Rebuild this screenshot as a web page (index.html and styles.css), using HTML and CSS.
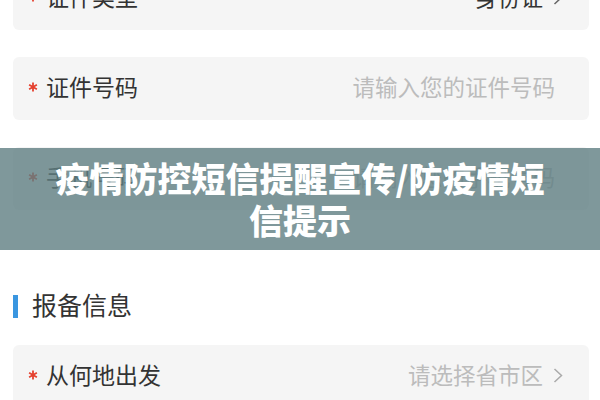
FILE: index.html
```html
<!DOCTYPE html>
<html lang="zh-CN">
<head>
  <meta charset="UTF-8">
  <meta name="viewport" content="width=device-width, initial-scale=1.0">
  <title>疫情防控短信提醒宣传</title>
  <link rel="stylesheet" href="styles.css">
</head>
<body>
  <div class="page">
    <!-- Identity fields -->
    <div class="form-list">
      <div class="field">
        <div class="field-label">
          <svg class="required" width="10" height="10" viewBox="0 0 10 10"><path d="M5 0.5V9.5M1.1 2.75L8.9 7.25M1.1 7.25L8.9 2.75" stroke="#e5412f" stroke-width="1.8"/></svg>
          证件类型
        </div>
        <div class="field-value selected">
          身份证
          <svg class="chevron" width="10" height="15" viewBox="0 0 10 15"><path d="M1.5 1L8.5 7.5L1.5 14" fill="none" stroke="#666" stroke-width="1.5"/></svg>
        </div>
      </div>

      <div class="field">
        <div class="field-label">
          <svg class="required" width="10" height="10" viewBox="0 0 10 10"><path d="M5 0.5V9.5M1.1 2.75L8.9 7.25M1.1 7.25L8.9 2.75" stroke="#e5412f" stroke-width="1.8"/></svg>
          证件号码
        </div>
        <div class="field-value placeholder input">请输入您的证件号码</div>
      </div>

      <div class="field">
        <div class="field-label">
          <svg class="required" width="10" height="10" viewBox="0 0 10 10"><path d="M5 0.5V9.5M1.1 2.75L8.9 7.25M1.1 7.25L8.9 2.75" stroke="#e5412f" stroke-width="1.8"/></svg>
          手机号码
        </div>
        <div class="field-value placeholder input">请输入您的手机号码</div>
      </div>
    </div>

    <!-- Report section -->
    <div class="section-title">报备信息</div>

    <div class="form-list">
      <div class="field">
        <div class="field-label">
          <svg class="required" width="10" height="10" viewBox="0 0 10 10"><path d="M5 0.5V9.5M1.1 2.75L8.9 7.25M1.1 7.25L8.9 2.75" stroke="#e5412f" stroke-width="1.8"/></svg>
          从何地出发
        </div>
        <div class="field-value placeholder">
          请选择省市区
          <svg class="chevron" width="10" height="15" viewBox="0 0 10 15"><path d="M1.5 1L8.5 7.5L1.5 14" fill="none" stroke="#aaa" stroke-width="1.5"/></svg>
        </div>
      </div>
    </div>
  </div>

  <!-- Caption banner -->
  <div class="banner">
    <div class="banner-text">疫情防控短信提醒宣传/防疫情短信提示</div>
  </div>
</body>
</html>
```

FILE: styles.css
```css
/* =====================
   Global
   ===================== */
body {
  margin: 0;
  background: #fff;
  font-family: "Noto Sans CJK SC", "Noto Sans", sans-serif;
  color: #333;
  overflow: hidden;
}

.page {
  padding: 0 11px 0 13px;
  margin-top: -33px;
}

/* =====================
   Form fields
   ===================== */
.form-list {
  display: flex;
  flex-direction: column;
  gap: 27px;
}

.field {
  box-sizing: border-box;
  height: 63px;
  display: flex;
  align-items: center;
  justify-content: space-between;
  padding: 0 26px 6px 15px;
  background: #f5f5f5;
  border-radius: 6px;
}

.field-label {
  display: flex;
  align-items: center;
  gap: 8px;
  font-size: 23px;
  color: #333;
}

.required {
  flex-shrink: 0;
  margin-top: 3px;
}

.field-value {
  display: flex;
  align-items: center;
  gap: 10px;
  font-size: 22.5px;
}

.field-value.selected {
  color: #333;
}

.field-value.placeholder {
  color: #bcbcbc;
}

.field-value.input {
  margin-right: 8px;
}

.chevron {
  margin-top: 3px;
}

/* =====================
   Section title
   ===================== */
.section-title {
  display: flex;
  align-items: center;
  gap: 14px;
  height: 30px;
  margin: 79px 0 26px;
  font-size: 25px;
  color: #333;
}

.section-title::before {
  content: "";
  width: 5px;
  height: 23px;
  margin-top: 4px;
  background: #3a96e0;
}

/* =====================
   Banner
   ===================== */
.banner {
  position: absolute;
  left: 0;
  right: 0;
  top: 148px;
  height: 102px;
  display: flex;
  align-items: center;
  justify-content: center;
  padding: 0 40px;
  background: rgba(95, 126, 130, 0.8);
}

.banner-text {
  max-width: 510px;
  text-align: center;
  font-size: 34px;
  font-weight: 900;
  line-height: 42px;
  color: #fff;
}
```
